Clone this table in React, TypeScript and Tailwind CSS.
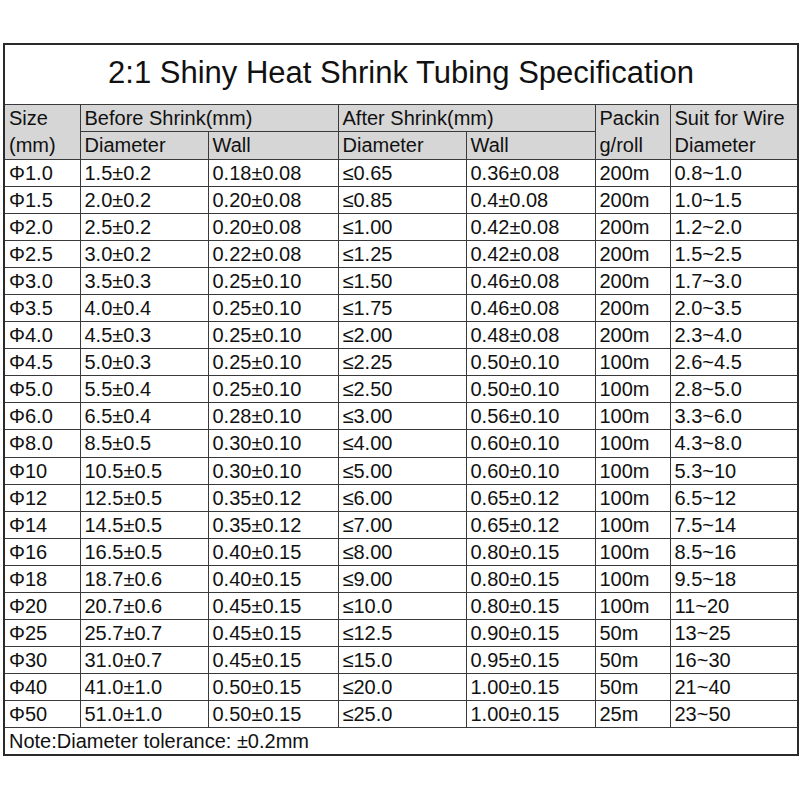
const rows: string[][] = [
  ["Φ1.0", "1.5±0.2", "0.18±0.08", "≤0.65", "0.36±0.08", "200m", "0.8~1.0"],
  ["Φ1.5", "2.0±0.2", "0.20±0.08", "≤0.85", "0.4±0.08", "200m", "1.0~1.5"],
  ["Φ2.0", "2.5±0.2", "0.20±0.08", "≤1.00", "0.42±0.08", "200m", "1.2~2.0"],
  ["Φ2.5", "3.0±0.2", "0.22±0.08", "≤1.25", "0.42±0.08", "200m", "1.5~2.5"],
  ["Φ3.0", "3.5±0.3", "0.25±0.10", "≤1.50", "0.46±0.08", "200m", "1.7~3.0"],
  ["Φ3.5", "4.0±0.4", "0.25±0.10", "≤1.75", "0.46±0.08", "200m", "2.0~3.5"],
  ["Φ4.0", "4.5±0.3", "0.25±0.10", "≤2.00", "0.48±0.08", "200m", "2.3~4.0"],
  ["Φ4.5", "5.0±0.3", "0.25±0.10", "≤2.25", "0.50±0.10", "100m", "2.6~4.5"],
  ["Φ5.0", "5.5±0.4", "0.25±0.10", "≤2.50", "0.50±0.10", "100m", "2.8~5.0"],
  ["Φ6.0", "6.5±0.4", "0.28±0.10", "≤3.00", "0.56±0.10", "100m", "3.3~6.0"],
  ["Φ8.0", "8.5±0.5", "0.30±0.10", "≤4.00", "0.60±0.10", "100m", "4.3~8.0"],
  ["Φ10", "10.5±0.5", "0.30±0.10", "≤5.00", "0.60±0.10", "100m", "5.3~10"],
  ["Φ12", "12.5±0.5", "0.35±0.12", "≤6.00", "0.65±0.12", "100m", "6.5~12"],
  ["Φ14", "14.5±0.5", "0.35±0.12", "≤7.00", "0.65±0.12", "100m", "7.5~14"],
  ["Φ16", "16.5±0.5", "0.40±0.15", "≤8.00", "0.80±0.15", "100m", "8.5~16"],
  ["Φ18", "18.7±0.6", "0.40±0.15", "≤9.00", "0.80±0.15", "100m", "9.5~18"],
  ["Φ20", "20.7±0.6", "0.45±0.15", "≤10.0", "0.80±0.15", "100m", "11~20"],
  ["Φ25", "25.7±0.7", "0.45±0.15", "≤12.5", "0.90±0.15", "50m", "13~25"],
  ["Φ30", "31.0±0.7", "0.45±0.15", "≤15.0", "0.95±0.15", "50m", "16~30"],
  ["Φ40", "41.0±1.0", "0.50±0.15", "≤20.0", "1.00±0.15", "50m", "21~40"],
  ["Φ50", "51.0±1.0", "0.50±0.15", "≤25.0", "1.00±0.15", "25m", "23~50"],
];

const cell = "border border-[#3a3a3a] px-[4px] py-0 text-left align-middle font-normal whitespace-nowrap";
const head = `${cell} bg-[#d6d6d6]`;

export default function App() {
  return (
    <div className="w-[800px] h-[800px] bg-white pt-[43px] pl-[3px] text-[#111] [font-family:'Liberation_Sans',Arial,sans-serif]">
      <table className="table-fixed w-[794px] border-collapse border-2 border-[#2a2a2a] text-[20px] leading-[24px]">
        <colgroup>
          <col className="w-[76px]" />
          <col className="w-[128px]" />
          <col className="w-[130px]" />
          <col className="w-[128px]" />
          <col className="w-[129px]" />
          <col className="w-[75px]" />
          <col className="w-[128px]" />
        </colgroup>
        <thead>
          <tr className="h-[60px]">
            <th colSpan={7} className="border border-[#3a3a3a] text-center font-normal text-[31px] pb-[2px]">
              2:1 Shiny Heat Shrink Tubing Specification
            </th>
          </tr>
          <tr className="h-[27px]">
            <th rowSpan={2} className={`${head} leading-[27px]`}>
              Size
              <br />
              (mm)
            </th>
            <th colSpan={2} className={head}>Before Shrink(mm)</th>
            <th colSpan={2} className={head}>After Shrink(mm)</th>
            <th rowSpan={2} className={`${head} leading-[27px]`}>
              Packin
              <br />
              g/roll
            </th>
            <th rowSpan={2} className={`${head} leading-[27px]`}>
              Suit for Wire
              <br />
              Diameter
            </th>
          </tr>
          <tr className="h-[27px]">
            <th className={head}>Diameter</th>
            <th className={head}>Wall</th>
            <th className={head}>Diameter</th>
            <th className={head}>Wall</th>
          </tr>
        </thead>
        <tbody>
          {rows.map((r) => (
            <tr key={r[0]} className="h-[27.1px]">
              {r.map((v, i) => (
                <td key={i} className={cell}>
                  {v}
                </td>
              ))}
            </tr>
          ))}
          <tr className="h-[27px]">
            <td colSpan={7} className={cell}>
              Note:Diameter tolerance: ±0.2mm
            </td>
          </tr>
        </tbody>
      </table>
    </div>
  );
}
